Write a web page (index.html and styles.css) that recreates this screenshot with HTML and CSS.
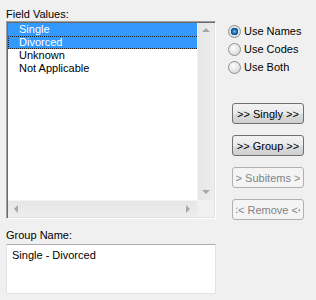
FILE: index.html
```html
<!DOCTYPE html>
<html lang="en">
<head>
    <meta charset="UTF-8">
    <title>Group Values</title>
    <link rel="stylesheet" href="styles.css">
</head>
<body>
    <div class="dialog">
        <div class="left-col">
            <div class="label">Field Values:</div>
            <div class="listbox">
                <div class="list-items">
                    <div class="item selected">Single</div>
                    <div class="item selected focused">Divorced</div>
                    <div class="item">Unknown</div>
                    <div class="item">Not Applicable</div>
                </div>
                <div class="vscroll">
                    <span class="arrow up"></span>
                    <span class="arrow down"></span>
                </div>
                <div class="hscroll">
                    <span class="arrow left"></span>
                    <span class="arrow right"></span>
                </div>
                <div class="corner"></div>
            </div>
            <div class="label group-label">Group Name:</div>
            <div class="textbox">Single - Divorced</div>
        </div>

        <div class="right-col">
            <div class="radios">
                <label class="radio-row"><span class="radio checked"></span>Use Names</label>
                <label class="radio-row"><span class="radio"></span>Use Codes</label>
                <label class="radio-row"><span class="radio"></span>Use Both</label>
            </div>
            <div class="buttons">
                <button class="btn"><span class="clip"><span>&gt;&gt; Singly &gt;&gt;</span></span></button>
                <button class="btn"><span class="clip"><span>&gt;&gt; Group &gt;&gt;</span></span></button>
                <button class="btn" disabled><span class="clip"><span>&gt;&gt; Subitems &gt;&gt;</span></span></button>
                <button class="btn" disabled><span class="clip"><span>&lt;&lt; Remove &lt;&lt;</span></span></button>
            </div>
        </div>
    </div>
</body>
</html>
```

FILE: styles.css
```css
body {
    margin: 0;
    background-color: #f0f0f0;
    font-family: "Liberation Sans", Arial, sans-serif;
    font-size: 11px;
    color: #000;
    overflow: hidden;
}

.dialog {
    display: flex;
    gap: 12px;
    padding: 8px 0 0 6px;
}

.left-col {
    width: 210px;
    display: flex;
    flex-direction: column;
}

.label {
    line-height: 13px;
    height: 13px;
}

.group-label {
    margin: 10px 0 2px;
}

/* list box with both scrollbars */
.listbox {
    height: 198px;
    box-sizing: border-box;
    border: 1px solid;
    border-color: #a0a0a0 #ffffff #ffffff #a0a0a0;
    padding: 1px;
    box-shadow: inset 1px 1px 0 #696969, inset -1px -1px 0 #e3e3e3;
    background-color: #fff;
    display: grid;
    grid-template-columns: 1fr 17px;
    grid-template-rows: 1fr 17px;
}

.list-items {
    background-color: #fff;
}

.item {
    height: 13px;
    line-height: 13px;
    padding-left: 11px;
    box-sizing: border-box;
    white-space: nowrap;
}

.item.selected {
    background-color: #3399ff;
    color: #fff;
}

.item.focused {
    border: 1px dotted #222;
    border-right: none;
    line-height: 11px;
    padding-left: 10px;
}

.vscroll,
.hscroll {
    position: relative;
    background-color: #eaeaea;
}

.vscroll {
    border-left: 1px solid #f3f3f3;
    background: linear-gradient(to right, #e6e6e6, #ededed);
}

.hscroll {
    border-top: 1px solid #f3f3f3;
    background: linear-gradient(#e6e6e6, #ededed);
}

.corner {
    background-color: #f0f0f0;
}

.arrow {
    position: absolute;
    width: 0;
    height: 0;
    border: 4px solid transparent;
}

.arrow.up {
    top: 5px;
    left: 4px;
    border-bottom: 4px solid #a7a7a7;
    border-top: none;
}

.arrow.down {
    bottom: 6px;
    left: 4px;
    border-top: 4px solid #a7a7a7;
    border-bottom: none;
}

.arrow.left {
    left: 6px;
    top: 4px;
    border-right: 4px solid #a7a7a7;
    border-left: none;
}

.arrow.right {
    right: 7px;
    top: 4px;
    border-left: 4px solid #a7a7a7;
    border-right: none;
}

.textbox {
    height: 50px;
    box-sizing: border-box;
    background-color: #fff;
    border: 1px solid #e2e3ea;
    border-top-color: #abadb3;
    padding: 4px 5px;
    line-height: 13px;
}

/* right side */
.right-col {
    display: flex;
    flex-direction: column;
}

.radios {
    margin-top: 14px;
}

.radio-row {
    display: flex;
    align-items: center;
    height: 18px;
    gap: 3px;
}

.radio {
    width: 13px;
    height: 13px;
    box-sizing: border-box;
    border-radius: 50%;
    border: 1px solid #8f8f8f;
    background: radial-gradient(circle at 40% 35%, #ffffff, #dcdcdc 70%, #cfcfcf);
}

.radio.checked {
    background: radial-gradient(circle, #7fc4f1 0, #1f73b7 2px, #0c4f8e 3.5px, #e6e6e6 4px, #d3d3d3 100%);
}

.buttons {
    margin: 27px 0 0 4px;
    display: flex;
    flex-direction: column;
    gap: 11px;
}

.btn {
    width: 72px;
    height: 21px;
    padding: 0 3px;
    border: 1px solid #707070;
    border-radius: 3px;
    background: linear-gradient(#f2f2f2 0%, #ebebeb 50%, #dddddd 51%, #cfcfcf 100%);
    font-family: inherit;
    font-size: 11px;
    color: #000;
    display: flex;
    align-items: center;
}

.btn:disabled {
    border-color: #adb2b5;
    background: #f4f4f4;
    color: #838383;
}

.clip {
    width: 100%;
    display: flex;
    justify-content: center;
    overflow: hidden;
    white-space: nowrap;
}
```
